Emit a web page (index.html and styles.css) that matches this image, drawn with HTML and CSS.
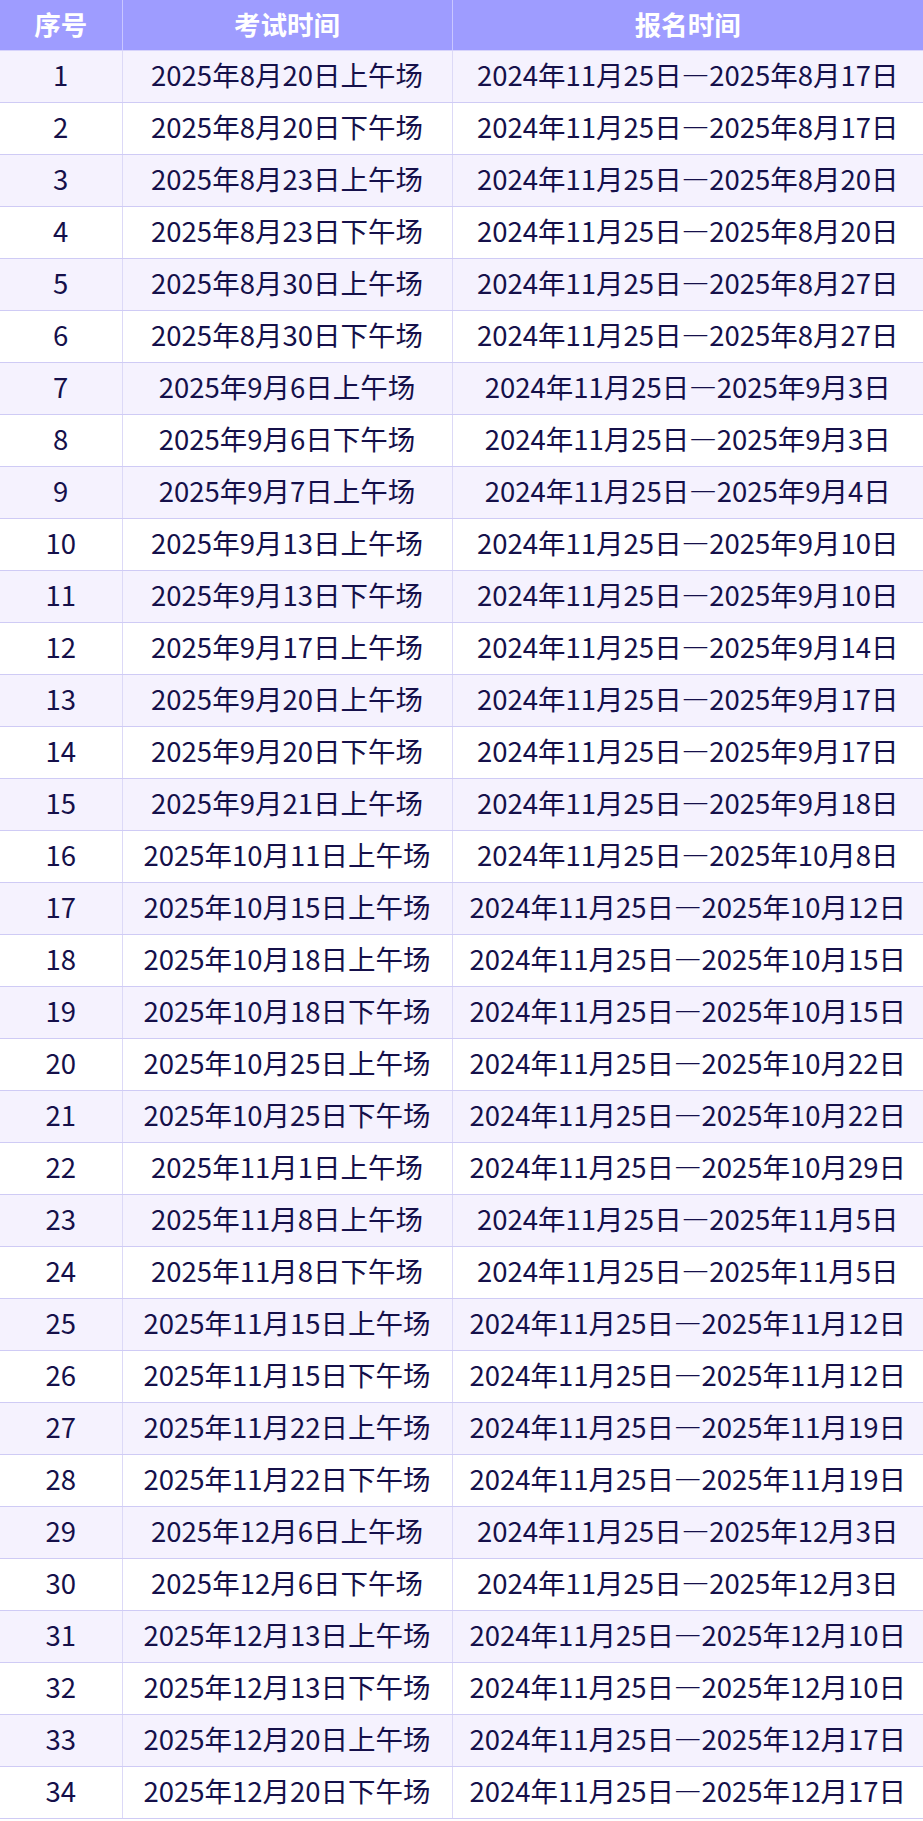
FILE: index.html
```html
<!DOCTYPE html>
<html lang="zh-CN">
<head>
<meta charset="utf-8">
<title>考试时间</title>
<link rel="stylesheet" href="styles.css">
</head>
<body>
<table class="schedule">
<colgroup><col class="c1"><col class="c2"><col class="c3"></colgroup>
<thead>
<tr><th>序号</th><th>考试时间</th><th>报名时间</th></tr>
</thead>
<tbody>
<tr><td>1</td><td>2025年8月20日上午场</td><td>2024年11月25日—2025年8月17日</td></tr>
<tr><td>2</td><td>2025年8月20日下午场</td><td>2024年11月25日—2025年8月17日</td></tr>
<tr><td>3</td><td>2025年8月23日上午场</td><td>2024年11月25日—2025年8月20日</td></tr>
<tr><td>4</td><td>2025年8月23日下午场</td><td>2024年11月25日—2025年8月20日</td></tr>
<tr><td>5</td><td>2025年8月30日上午场</td><td>2024年11月25日—2025年8月27日</td></tr>
<tr><td>6</td><td>2025年8月30日下午场</td><td>2024年11月25日—2025年8月27日</td></tr>
<tr><td>7</td><td>2025年9月6日上午场</td><td>2024年11月25日—2025年9月3日</td></tr>
<tr><td>8</td><td>2025年9月6日下午场</td><td>2024年11月25日—2025年9月3日</td></tr>
<tr><td>9</td><td>2025年9月7日上午场</td><td>2024年11月25日—2025年9月4日</td></tr>
<tr><td>10</td><td>2025年9月13日上午场</td><td>2024年11月25日—2025年9月10日</td></tr>
<tr><td>11</td><td>2025年9月13日下午场</td><td>2024年11月25日—2025年9月10日</td></tr>
<tr><td>12</td><td>2025年9月17日上午场</td><td>2024年11月25日—2025年9月14日</td></tr>
<tr><td>13</td><td>2025年9月20日上午场</td><td>2024年11月25日—2025年9月17日</td></tr>
<tr><td>14</td><td>2025年9月20日下午场</td><td>2024年11月25日—2025年9月17日</td></tr>
<tr><td>15</td><td>2025年9月21日上午场</td><td>2024年11月25日—2025年9月18日</td></tr>
<tr><td>16</td><td>2025年10月11日上午场</td><td>2024年11月25日—2025年10月8日</td></tr>
<tr><td>17</td><td>2025年10月15日上午场</td><td>2024年11月25日—2025年10月12日</td></tr>
<tr><td>18</td><td>2025年10月18日上午场</td><td>2024年11月25日—2025年10月15日</td></tr>
<tr><td>19</td><td>2025年10月18日下午场</td><td>2024年11月25日—2025年10月15日</td></tr>
<tr><td>20</td><td>2025年10月25日上午场</td><td>2024年11月25日—2025年10月22日</td></tr>
<tr><td>21</td><td>2025年10月25日下午场</td><td>2024年11月25日—2025年10月22日</td></tr>
<tr><td>22</td><td>2025年11月1日上午场</td><td>2024年11月25日—2025年10月29日</td></tr>
<tr><td>23</td><td>2025年11月8日上午场</td><td>2024年11月25日—2025年11月5日</td></tr>
<tr><td>24</td><td>2025年11月8日下午场</td><td>2024年11月25日—2025年11月5日</td></tr>
<tr><td>25</td><td>2025年11月15日上午场</td><td>2024年11月25日—2025年11月12日</td></tr>
<tr><td>26</td><td>2025年11月15日下午场</td><td>2024年11月25日—2025年11月12日</td></tr>
<tr><td>27</td><td>2025年11月22日上午场</td><td>2024年11月25日—2025年11月19日</td></tr>
<tr><td>28</td><td>2025年11月22日下午场</td><td>2024年11月25日—2025年11月19日</td></tr>
<tr><td>29</td><td>2025年12月6日上午场</td><td>2024年11月25日—2025年12月3日</td></tr>
<tr><td>30</td><td>2025年12月6日下午场</td><td>2024年11月25日—2025年12月3日</td></tr>
<tr><td>31</td><td>2025年12月13日上午场</td><td>2024年11月25日—2025年12月10日</td></tr>
<tr><td>32</td><td>2025年12月13日下午场</td><td>2024年11月25日—2025年12月10日</td></tr>
<tr><td>33</td><td>2025年12月20日上午场</td><td>2024年11月25日—2025年12月17日</td></tr>
<tr><td>34</td><td>2025年12月20日下午场</td><td>2024年11月25日—2025年12月17日</td></tr>
</tbody>
</table>
</body>
</html>
```
FILE: styles.css
```css
html, body {
  margin: 0;
  padding: 0;
  background: #ffffff;
}
.schedule {
  width: 923px;
  border-collapse: collapse;
  table-layout: fixed;
  font-family: "Noto Sans CJK SC", "Noto Sans", sans-serif;
  color: #15104a;
}
.c1 { width: 122px; }
.c2 { width: 330px; }
.c3 { width: 471px; }
.schedule th {
  height: 50px;
  box-sizing: border-box;
  padding: 0 0 2px;
  background: #9e9cff;
  color: #ffffff;
  font-size: 26.5px;
  font-weight: 700;
  text-align: center;
  border-right: 1px solid #c9c6ff;
  border-bottom: 1px solid #d6d3fb;
  line-height: 1;
}
.schedule td {
  height: 52px;
  box-sizing: border-box;
  padding: 0 0 2px;
  font-size: 27.5px;
  text-align: center;
  white-space: nowrap;
  overflow: hidden;
  border-right: 1px solid #dcd9f7;
  border-bottom: 1px solid #cfcbf5;
  line-height: 1;
}
.schedule th:last-child,
.schedule td:last-child {
  border-right: none;
}
.schedule tbody tr:nth-child(odd) td {
  background: #f5f2fe;
}
.schedule tbody tr:nth-child(even) td {
  background: #ffffff;
}
```
